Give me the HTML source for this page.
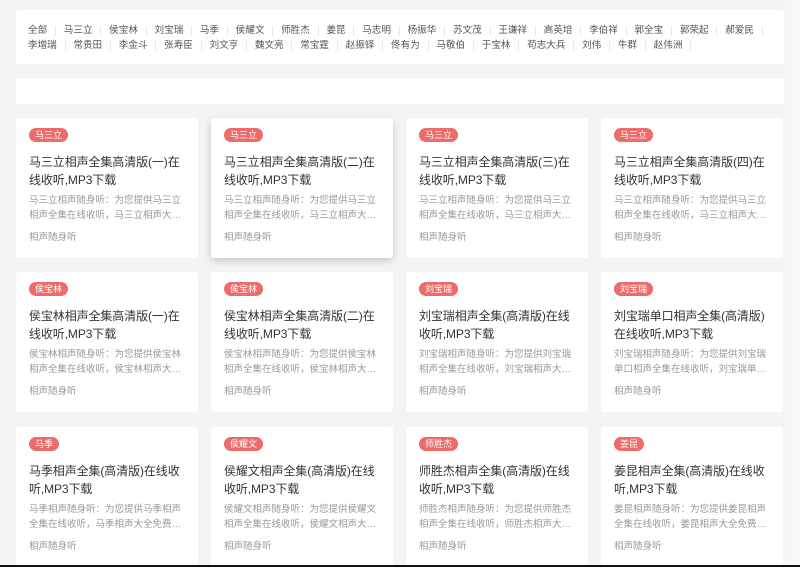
<!DOCTYPE html><html><head><meta charset="utf-8"><style>
*{margin:0;padding:0;box-sizing:border-box}
body{width:800px;height:567px;overflow:hidden;background:#f3f4f6;font-family:"Liberation Sans","Noto Sans CJK SC",sans-serif;position:relative}
.box{position:absolute;left:16px;width:768px;background:#fff;border-radius:3px}
.nav{top:10px;height:54px;padding:13px 12px;font-size:9.6px;color:#555;line-height:15px;white-space:nowrap}
.nav span{display:inline-block;padding:0 7.8px;border-right:1px solid #e6e6e6;line-height:10px}
.nav span:first-child,.nav .f{padding-left:0}
.card{position:absolute;width:182px;height:140px;background:#fff;border-radius:3px;padding:10px 13px}
.card.sh{box-shadow:0 3px 8px rgba(0,0,0,.18)}
.tag{display:inline-block;background:#ee6b6b;color:#fff;font-size:9px;height:14px;line-height:14px;padding:0 6px;border-radius:7px;vertical-align:top}
.t{font-size:12px;color:#333;line-height:18px;margin-top:7px;height:36px;letter-spacing:-0.1px}
.d{font-size:9.5px;color:#999;line-height:15px;margin-top:4px;height:30px;overflow:hidden;display:-webkit-box;-webkit-line-clamp:2;-webkit-box-orient:vertical}
.s{font-size:9.5px;color:#999;margin-top:6px}
.bar{position:absolute;left:0;bottom:0;width:800px;height:2px;background:#111}
.rs{position:absolute;right:0;top:0;width:15px;height:567px;background:#f8f8fa}
</style></head><body>
<div class="rs"></div>
<div class="box nav"><span>全部</span><span>马三立</span><span>侯宝林</span><span>刘宝瑞</span><span>马季</span><span>侯耀文</span><span>师胜杰</span><span>姜昆</span><span>马志明</span><span>杨振华</span><span>苏文茂</span><span>王谦祥</span><span>高英培</span><span>李伯祥</span><span>郭全宝</span><span>郭荣起</span><span>郝爱民</span><br><span class="f">李增瑞</span><span>常贵田</span><span>李金斗</span><span>张寿臣</span><span>刘文亨</span><span>魏文亮</span><span>常宝霆</span><span>赵振铎</span><span>佟有为</span><span>马敬伯</span><span>于宝林</span><span>苟志大兵</span><span>刘伟</span><span>牛群</span><span>赵伟洲</span></div>
<div class="box" style="top:78px;height:26px"></div>

<div class="card" style="left:16px;top:118px"><span class="tag">马三立</span><div class="t">马三立相声全集高清版(一)在线收听,MP3下载</div><div class="d">马三立相声随身听：为您提供马三立相声全集在线收听，马三立相声大全免费下载</div><div class="s">相声随身听</div></div>
<div class="card sh" style="left:211px;top:118px"><span class="tag">马三立</span><div class="t">马三立相声全集高清版(二)在线收听,MP3下载</div><div class="d">马三立相声随身听：为您提供马三立相声全集在线收听，马三立相声大全免费下载</div><div class="s">相声随身听</div></div>
<div class="card" style="left:406px;top:118px"><span class="tag">马三立</span><div class="t">马三立相声全集高清版(三)在线收听,MP3下载</div><div class="d">马三立相声随身听：为您提供马三立相声全集在线收听，马三立相声大全免费下载</div><div class="s">相声随身听</div></div>
<div class="card" style="left:601px;top:118px"><span class="tag">马三立</span><div class="t">马三立相声全集高清版(四)在线收听,MP3下载</div><div class="d">马三立相声随身听：为您提供马三立相声全集在线收听，马三立相声大全免费下载</div><div class="s">相声随身听</div></div>

<div class="card" style="left:16px;top:272px"><span class="tag">侯宝林</span><div class="t">侯宝林相声全集高清版(一)在线收听,MP3下载</div><div class="d">侯宝林相声随身听：为您提供侯宝林相声全集在线收听，侯宝林相声大全免费下载</div><div class="s">相声随身听</div></div>
<div class="card" style="left:211px;top:272px"><span class="tag">侯宝林</span><div class="t">侯宝林相声全集高清版(二)在线收听,MP3下载</div><div class="d">侯宝林相声随身听：为您提供侯宝林相声全集在线收听，侯宝林相声大全免费下载</div><div class="s">相声随身听</div></div>
<div class="card" style="left:406px;top:272px"><span class="tag">刘宝瑞</span><div class="t">刘宝瑞相声全集(高清版)在线收听,MP3下载</div><div class="d">刘宝瑞相声随身听：为您提供刘宝瑞相声全集在线收听，刘宝瑞相声大全免费下载</div><div class="s">相声随身听</div></div>
<div class="card" style="left:601px;top:272px"><span class="tag">刘宝瑞</span><div class="t">刘宝瑞单口相声全集(高清版)在线收听,MP3下载</div><div class="d">刘宝瑞相声随身听：为您提供刘宝瑞单口相声全集在线收听，刘宝瑞单口相声大全</div><div class="s">相声随身听</div></div>

<div class="card" style="left:16px;top:427px"><span class="tag">马季</span><div class="t">马季相声全集(高清版)在线收听,MP3下载</div><div class="d">马季相声随身听：为您提供马季相声全集在线收听，马季相声大全免费下载</div><div class="s">相声随身听</div></div>
<div class="card" style="left:211px;top:427px"><span class="tag">侯耀文</span><div class="t">侯耀文相声全集(高清版)在线收听,MP3下载</div><div class="d">侯耀文相声随身听：为您提供侯耀文相声全集在线收听，侯耀文相声大全免费下载</div><div class="s">相声随身听</div></div>
<div class="card" style="left:406px;top:427px"><span class="tag">师胜杰</span><div class="t">师胜杰相声全集(高清版)在线收听,MP3下载</div><div class="d">师胜杰相声随身听：为您提供师胜杰相声全集在线收听，师胜杰相声大全免费下载</div><div class="s">相声随身听</div></div>
<div class="card" style="left:601px;top:427px"><span class="tag">姜昆</span><div class="t">姜昆相声全集(高清版)在线收听,MP3下载</div><div class="d">姜昆相声随身听：为您提供姜昆相声全集在线收听，姜昆相声大全免费下载</div><div class="s">相声随身听</div></div>
<div class="bar"></div>
</body></html>
